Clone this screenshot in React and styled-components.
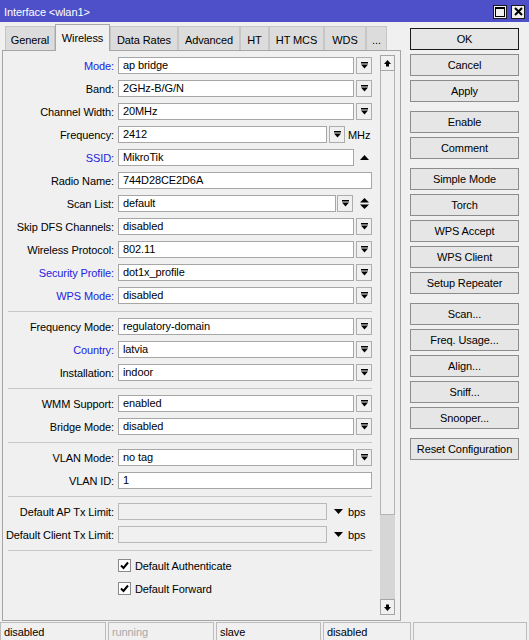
import React from 'react';
import styled, { createGlobalStyle } from 'styled-components';

const Global = createGlobalStyle`
  html, body { margin: 0; padding: 0; background: #f0f0f0; }
  body { font-family: "Liberation Sans", Arial, sans-serif; font-size: 11px; color: #000; letter-spacing: -0.1px; }
  * { box-sizing: border-box; }
`;

const Window = styled.div`
  width: 529px;
  height: 640px;
  display: flex;
  flex-direction: column;
  background: #f0f0f0;
  overflow: hidden;
`;

const TitleBar = styled.div`
  height: 22px;
  flex: none;
  background: #4d50c8;
  color: #fff;
  display: flex;
  align-items: center;
  padding: 1px 4px 0 4px;
  font-size: 11px;
`;

const TitleText = styled.div`
  flex: 1;
`;

const TitleButtons = styled.div`
  display: flex;
  gap: 4px;
`;

const TitleButton = styled.div`
  width: 14px;
  height: 14px;
  background: #f0f0f0;
  border: 1px solid #1a1a1a;
  display: flex;
  align-items: center;
  justify-content: center;
`;

const Body = styled.div`
  flex: 1;
  display: flex;
  padding-left: 2px;
  min-height: 0;
`;

const LeftColumn = styled.div`
  width: 399px;
  display: flex;
  flex-direction: column;
`;

const Tabs = styled.div`
  height: 28px;
  display: flex;
  align-items: flex-end;
  padding-left: 3px;
`;

const Tab = styled.div`
  width: ${p => p.$w}px;
  height: ${p => (p.$active ? 27 : 24)}px;
  margin-bottom: ${p => (p.$active ? -1 : 0)}px;
  background: ${p => (p.$active ? '#f0f0f0' : '#dcdcdc')};
  border: 1px solid ${p => (p.$active ? '#a8a8a8' : '#c6c6c6')};
  border-bottom: none;
  display: flex;
  align-items: center;
  justify-content: center;
  padding-top: ${p => (p.$active ? 0 : 2)}px;
  position: relative;
  z-index: ${p => (p.$active ? 2 : 1)};
  white-space: nowrap;
`;

const Panel = styled.div`
  flex: 1;
  margin-bottom: 1px;
  border: 1px solid #a5a5a5;
  background: #f0f0f0;
  display: flex;
  min-height: 0;
`;

const Form = styled.div`
  width: 374px;
  padding-top: 6px;
  display: flex;
  flex-direction: column;
  gap: 6px;
`;

const Row = styled.div`
  display: flex;
  align-items: center;
  height: 17px;
`;

const Label = styled.div`
  width: 115px;
  padding-right: 4px;
  text-align: right;
  white-space: nowrap;
  color: ${p => (p.$blue ? '#2323e0' : '#000')};
`;

const Field = styled.div`
  width: ${p => p.$w}px;
  height: 17px;
  border: 1px solid #a6a6a6;
  background: ${p => (p.$disabled ? '#f0f0f0' : '#fff')};
  border-color: ${p => (p.$disabled ? '#b9b9b9' : '#a6a6a6')};
  padding: 0 4px;
  line-height: 15px;
  white-space: nowrap;
  overflow: hidden;
`;

const DropButton = styled.div`
  width: 16px;
  height: 17px;
  margin-left: ${p => p.$gap ?? 2}px;
  border: 1px solid #adadad;
  background: #f0f0f0;
  display: flex;
  align-items: center;
  justify-content: center;
`;

const IconSlot = styled.div`
  width: ${p => p.$w ?? 20}px;
  display: flex;
  align-items: center;
  justify-content: center;
  margin-left: ${p => p.$ml ?? 0}px;
`;

const Suffix = styled.div`
  margin-left: ${p => p.$ml ?? 3}px;
`;

const Separator = styled.div`
  margin: 1px 0 0 5px;
  width: 364px;
  height: 1px;
  background: #c8c8c8;
`;

const CheckRow = styled.div`
  display: flex;
  align-items: center;
  height: 17px;
  padding-left: 115px;
`;

const CheckBox = styled.div`
  width: 13px;
  height: 13px;
  border: 1px solid #8a8a8a;
  background: #fff;
  display: flex;
  align-items: center;
  justify-content: center;
  margin-right: 4px;
`;

const Scrollbar = styled.div`
  width: 15px;
  margin: 4px 0 5px 3px;
  display: flex;
  flex-direction: column;
  background: #d6d6d6;
`;

const ScrollButton = styled.div`
  height: 16px;
  border: 1px solid #a5a5a5;
  background: #f0f0f0;
  display: flex;
  align-items: center;
  justify-content: center;
  flex: none;
`;

const ScrollThumb = styled.div`
  height: 444px;
  border: 1px solid #b4b4b4;
  border-top: none;
  background: #f0f0f0;
`;

const ScrollTrack = styled.div`
  flex: 1;
`;

const Buttons = styled.div`
  width: 109px;
  margin-left: 9px;
  padding-top: 6px;
  display: flex;
  flex-direction: column;
  gap: 4px;
`;

const Button = styled.div`
  height: 22px;
  flex: none;
  border: 1px solid ${p => (p.$default ? '#1a1a1a' : '#8c8c8c')};
  background: #e6e6e6;
  display: flex;
  align-items: center;
  justify-content: center;
  margin-top: ${p => (p.$group ? 5 : 0)}px;
  white-space: nowrap;
`;

const StatusBar = styled.div`
  height: 18px;
  flex: none;
  display: flex;
  gap: 2px;
`;

const StatusCell = styled.div`
  width: ${p => p.$w}px;
  border: 1px solid #bcbcbc;
  border-bottom: none;
  padding: 3px 0 0 3px;
  color: ${p => (p.$muted ? '#a8a8a8' : '#000')};
  white-space: nowrap;
`;

const DropIcon = () => (
  <svg width="7" height="7" viewBox="0 0 7 7">
    <rect x="0" y="0" width="7" height="1.5" fill="#000" />
    <path d="M0 2.5 H7 L3.5 6.5 Z" fill="#000" />
  </svg>
);

const UpTri = () => (
  <svg width="9" height="5" viewBox="0 0 9 5">
    <path d="M0 5 L4.5 0 L9 5 Z" fill="#000" />
  </svg>
);

const DownTri = () => (
  <svg width="9" height="5" viewBox="0 0 9 5">
    <path d="M0 0 L9 0 L4.5 5 Z" fill="#000" />
  </svg>
);

const UpDown = () => (
  <svg width="9" height="11" viewBox="0 0 9 11">
    <path d="M0 4.5 L4.5 0 L9 4.5 Z" fill="#000" />
    <path d="M0 6.5 L9 6.5 L4.5 11 Z" fill="#000" />
  </svg>
);

const ScrollUp = () => (
  <svg width="7" height="7" viewBox="0 0 7 7">
    <path d="M0 4 L3.5 0 L7 4 Z M2 4 H5 V6.5 H2 Z" fill="#000" />
  </svg>
);

const ScrollDown = () => (
  <svg width="7" height="7" viewBox="0 0 7 7">
    <path d="M2 0.5 H5 V3 H7 L3.5 7 L0 3 H2 Z" fill="#000" />
  </svg>
);

const Check = () => (
  <svg width="9" height="9" viewBox="0 0 9 9">
    <path d="M1 4.5 L3.5 7 L8 1.5" stroke="#000" strokeWidth="2" fill="none" />
  </svg>
);

const MaxIcon = () => (
  <svg width="10" height="10" viewBox="0 0 10 10">
    <rect x="0.5" y="0.5" width="9" height="9" fill="none" stroke="#000" />
    <rect x="0" y="0" width="10" height="2" fill="#000" />
  </svg>
);

const CloseIcon = () => (
  <svg width="9" height="9" viewBox="0 0 9 9">
    <path d="M1 1 L8 8 M8 1 L1 8" stroke="#000" strokeWidth="2" />
  </svg>
);

const tabs = [
  ['General', 50], ['Wireless', 55, true], ['Data Rates', 68], ['Advanced', 62],
  ['HT', 29], ['HT MCS', 55], ['WDS', 42], ['...', 21],
];

const SelectRow = ({ label, value, blue }) => (
  <Row>
    <Label $blue={blue}>{label}:</Label>
    <Field $w={236}>{value}</Field>
    <DropButton><DropIcon /></DropButton>
  </Row>
);

const buttonList = [
  ['OK', false, true], ['Cancel'], ['Apply'],
  ['Enable', true], ['Comment'],
  ['Simple Mode', true], ['Torch'], ['WPS Accept'], ['WPS Client'], ['Setup Repeater'],
  ['Scan...', true], ['Freq. Usage...'], ['Align...'], ['Sniff...'], ['Snooper...'],
  ['Reset Configuration', true],
];

const statuses = [
  ['disabled', 106], ['running', 106, true], ['slave', 105], ['disabled', 88], ['', 114],
];

export default function App() {
  return (
    <>
      <Global />
      <Window>
        <TitleBar>
          <TitleText>Interface &lt;wlan1&gt;</TitleText>
          <TitleButtons>
            <TitleButton><MaxIcon /></TitleButton>
            <TitleButton><CloseIcon /></TitleButton>
          </TitleButtons>
        </TitleBar>
        <Body>
          <LeftColumn>
            <Tabs>
              {tabs.map(([t, w, a]) => (
                <Tab key={t} $w={w} $active={a}>{t}</Tab>
              ))}
            </Tabs>
            <Panel>
              <Form>
                <SelectRow label="Mode" value="ap bridge" blue />
                <SelectRow label="Band" value="2GHz-B/G/N" />
                <SelectRow label="Channel Width" value="20MHz" />
                <Row>
                  <Label>Frequency:</Label>
                  <Field $w={209}>2412</Field>
                  <DropButton><DropIcon /></DropButton>
                  <Suffix>MHz</Suffix>
                </Row>
                <Row>
                  <Label $blue>SSID:</Label>
                  <Field $w={236}>MikroTik</Field>
                  <IconSlot $w={20}><UpTri /></IconSlot>
                </Row>
                <Row>
                  <Label>Radio Name:</Label>
                  <Field $w={254}>744D28CE2D6A</Field>
                </Row>
                <Row>
                  <Label>Scan List:</Label>
                  <Field $w={218}>default</Field>
                  <DropButton $gap={1}><DropIcon /></DropButton>
                  <IconSlot $w={18} $ml={2}><UpDown /></IconSlot>
                </Row>
                <SelectRow label="Skip DFS Channels" value="disabled" />
                <SelectRow label="Wireless Protocol" value="802.11" />
                <SelectRow label="Security Profile" value="dot1x_profile" blue />
                <SelectRow label="WPS Mode" value="disabled" blue />
                <Separator />
                <SelectRow label="Frequency Mode" value="regulatory-domain" />
                <SelectRow label="Country" value="latvia" blue />
                <SelectRow label="Installation" value="indoor" />
                <Separator />
                <SelectRow label="WMM Support" value="enabled" />
                <SelectRow label="Bridge Mode" value="disabled" />
                <Separator />
                <SelectRow label="VLAN Mode" value="no tag" />
                <Row>
                  <Label>VLAN ID:</Label>
                  <Field $w={254}>1</Field>
                </Row>
                <Separator />
                <Row>
                  <Label>Default AP Tx Limit:</Label>
                  <Field $w={209} $disabled />
                  <IconSlot $w={22}><DownTri /></IconSlot>
                  <Suffix $ml={-1}>bps</Suffix>
                </Row>
                <Row>
                  <Label>Default Client Tx Limit:</Label>
                  <Field $w={209} $disabled />
                  <IconSlot $w={22}><DownTri /></IconSlot>
                  <Suffix $ml={-1}>bps</Suffix>
                </Row>
                <Separator />
                <CheckRow>
                  <CheckBox><Check /></CheckBox>
                  Default Authenticate
                </CheckRow>
                <CheckRow>
                  <CheckBox><Check /></CheckBox>
                  Default Forward
                </CheckRow>
              </Form>
              <Scrollbar>
                <ScrollButton><ScrollUp /></ScrollButton>
                <ScrollThumb />
                <ScrollTrack />
                <ScrollButton><ScrollDown /></ScrollButton>
              </Scrollbar>
            </Panel>
          </LeftColumn>
          <Buttons>
            {buttonList.map(([t, g, d]) => (
              <Button key={t} $group={g} $default={d}>{t}</Button>
            ))}
          </Buttons>
        </Body>
        <StatusBar>
          {statuses.map(([t, w, m], i) => (
            <StatusCell key={i} $w={w} $muted={m}>{t}</StatusCell>
          ))}
        </StatusBar>
      </Window>
    </>
  );
}
